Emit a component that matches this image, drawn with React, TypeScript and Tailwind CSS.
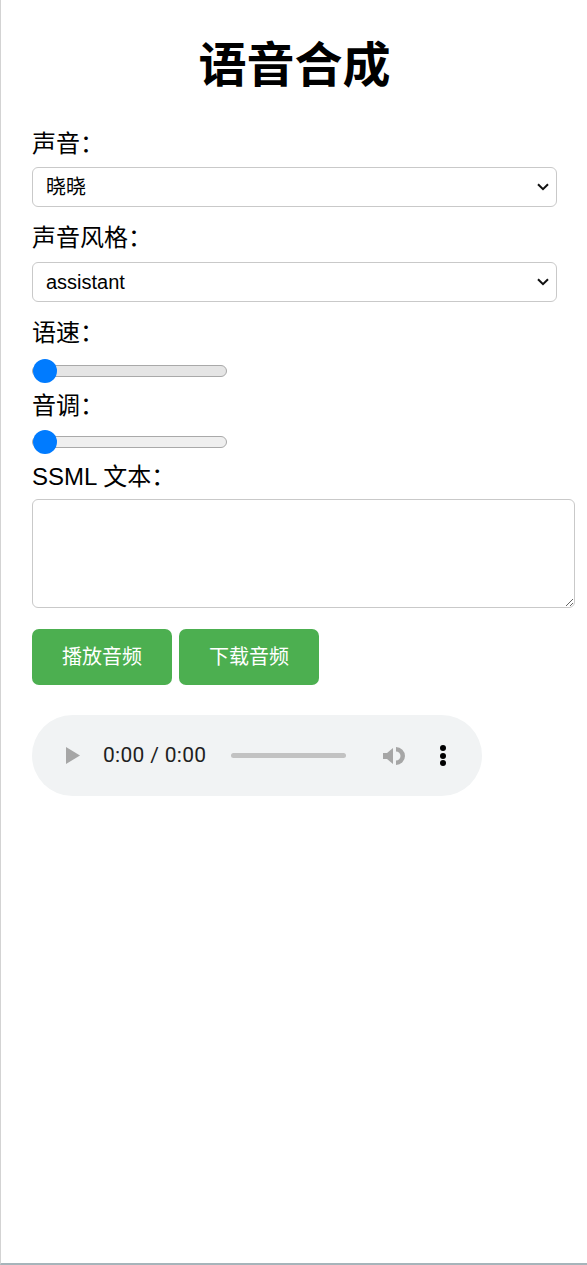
import { useState } from "react";

const font = "font-['Liberation_Sans','Noto_Sans_CJK_SC',sans-serif]";

function Label({ text, className }: { text: string; className: string }) {
  return <label className={`block text-[24px] leading-[24px] text-black ${className}`}>{text}</label>;
}

function Select({ value, options, className }: { value: string; options: string[]; className: string }) {
  return (
    <div className={`relative w-[525px] ${className}`}>
      <select
        defaultValue={value}
        className="block w-full h-[40px] appearance-none rounded-[6px] border border-[#c9c9c9] bg-white pl-[13px] text-[20px] text-black outline-none"
      >
        {options.map((o) => (
          <option key={o}>{o}</option>
        ))}
      </select>
      <svg
        className="pointer-events-none absolute right-[8px] top-[16px]"
        width="12"
        height="8"
        viewBox="0 0 12 8"
      >
        <path d="M1 1.2 6 6.2 11 1.2" fill="none" stroke="#111" strokeWidth="2" />
      </svg>
    </div>
  );
}

function Range({ className, track }: { className: string; track: string }) {
  const [v, setV] = useState(0);
  return (
    <div className={`flex h-[24px] items-center ${className}`}>
      <input
        type="range"
        min={0}
        max={100}
        value={v}
        onChange={(e) => setV(Number(e.target.value))}
        className={`block h-[12px] w-[195px] appearance-none rounded-full border border-[#a9a9a9] ${track} [&::-webkit-slider-thumb]:h-[24px] [&::-webkit-slider-thumb]:w-[24px] [&::-webkit-slider-thumb]:appearance-none [&::-webkit-slider-thumb]:rounded-full [&::-webkit-slider-thumb]:bg-[#007bff]`}
      />
    </div>
  );
}

function AudioBar() {
  return (
    <div className="mt-[30px] flex h-[81px] w-[450px] items-center rounded-full bg-[#f1f3f4]">
      <svg className="ml-[34px]" width="14" height="17" viewBox="0 0 14 17">
        <path d="M0 0 14 8.5 0 17z" fill="#a6a6a6" />
      </svg>
      <span className="ml-[23px] text-[21px] tracking-[0.3px] text-[#1f1f1f] font-['Roboto',sans-serif]">
        0:00 / 0:00
      </span>
      <div className="ml-[25px] h-[5px] w-[115px] rounded-full bg-[#c2c2c2]" />
      <svg className="ml-[37px]" width="23" height="22" viewBox="0 0 23 22">
        <path d="M0 8h4l6-5v16l-6-5H0z" fill="#a6a6a6" />
        <path d="M13 2A9 9 0 0 1 13 20V15.5A4.5 4.5 0 0 0 13 6.5Z" fill="#a6a6a6" />
      </svg>
      <div className="ml-[34px] flex flex-col gap-[1.5px]">
        <span className="block h-[6px] w-[6px] rounded-full bg-black" />
        <span className="block h-[6px] w-[6px] rounded-full bg-black" />
        <span className="block h-[6px] w-[6px] rounded-full bg-black" />
      </div>
    </div>
  );
}

export default function App() {
  return (
    <div className={`min-h-[1265px] border-l border-b-2 border-l-[#d3d3d3] border-b-[#a6b4ba] bg-white pl-[31px] ${font}`}>
      <div className="w-[525px] pt-[42px]">
        <h1 className="text-center text-[48px] leading-[48px] font-bold text-black">语音合成</h1>

        <Label text="声音：" className="mt-[42px]" />
        <Select value="晓晓" options={["晓晓", "云希", "云扬", "晓伊"]} className="mt-[11px]" />

        <Label text="声音风格：" className="mt-[19px]" />
        <Select value="assistant" options={["assistant", "chat", "cheerful", "sad"]} className="mt-[12px]" />

        <Label text="语速：" className="mt-[19px]" />
        <Range className="mt-[14px]" track="bg-[#e5e5e5]" />

        <Label text="音调：" className="mt-[11px]" />
        <Range className="mt-[12px]" track="bg-[#efefef]" />

        <Label text="SSML 文本：" className="mt-[11px]" />
        <textarea className="mt-[10px] block h-[109px] w-[543px] rounded-[6px] border border-[#c9c9c9] p-[8px] text-[20px] outline-none" />

        <div className="mt-[21px] flex gap-[7px]">
          <button className="h-[56px] w-[140px] rounded-[7px] bg-[#4caf50] text-[20px] text-white">播放音频</button>
          <button className="h-[56px] w-[140px] rounded-[7px] bg-[#4caf50] text-[20px] text-white">下载音频</button>
        </div>

        <AudioBar />
      </div>
    </div>
  );
}
